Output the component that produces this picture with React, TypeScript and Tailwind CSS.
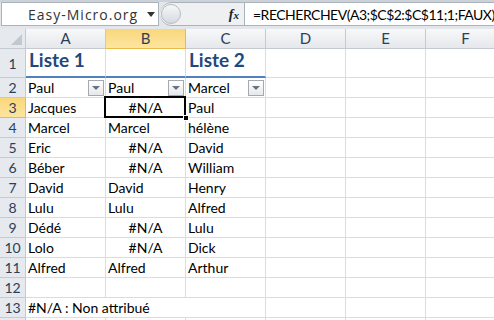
import React from 'react';

const cols = ['A', 'B', 'C', 'D', 'E', 'F'];

const data: [string, string, string][] = [
  ['Jacques', '#N/A', 'Paul'],
  ['Marcel', 'Marcel', 'hélène'],
  ['Eric', '#N/A', 'David'],
  ['Béber', '#N/A', 'William'],
  ['David', 'David', 'Henry'],
  ['Lulu', 'Lulu', 'Alfred'],
  ['Dédé', '#N/A', 'Lulu'],
  ['Lolo', '#N/A', 'Dick'],
  ['Alfred', 'Alfred', 'Arthur'],
];

const font = { fontFamily: 'Lato, "Liberation Sans", sans-serif' };

function RowHead({ n, active, h = 'h-[20px]' }: { n?: number; active?: boolean; h?: string }) {
  return (
    <div
      className={`${h} w-[26px] shrink-0 border-r border-b flex items-center justify-center text-[14px] ${
        active
          ? 'bg-gradient-to-b from-[#f9d77a] to-[#fde5a0] border-[#e9b949] text-[#2c3e5a]'
          : 'bg-[#e6e9ed] border-[#c5cad1] text-[#2c3e5a]'
      }`}
    >
      {n}
    </div>
  );
}

function Cell({ children, className = '' }: { children?: React.ReactNode; className?: string }) {
  return (
    <div className={`h-[20px] w-[80px] shrink-0 border-r border-b border-[#dadcdd] px-[2px] flex items-center text-[14px] text-black whitespace-nowrap ${className}`}>
      {children}
    </div>
  );
}

function Drop() {
  return (
    <div className="w-[16px] h-[16px] border border-[#a3a9b1] bg-gradient-to-b from-white to-[#e6e8eb] flex items-center justify-center">
      <div className="w-0 h-0 border-l-[4px] border-r-[4px] border-t-[4px] border-l-transparent border-r-transparent border-t-[#6b7280]" />
    </div>
  );
}

export default function App() {
  return (
    <div className="w-[494px] h-[320px] overflow-hidden bg-white" style={font}>
      {/* formula bar */}
      <div className="h-[29px] bg-[#e3e6ea] border-t-2 border-[#cdd2d8] flex items-start">
        <div className="w-[158px] shrink-0 h-[24px] ml-[1px] bg-white border border-[#aab2bc] flex items-center">
          <span className="ml-[26px] text-[14px] tracking-[1px] text-[#333] whitespace-nowrap" style={{ fontFamily: '"Open Sans", sans-serif' }}>
            Easy-Micro.org
          </span>
          <div className="ml-auto mr-[3px] w-0 h-0 border-l-[4px] border-r-[4px] border-t-[5px] border-l-transparent border-r-transparent border-t-[#333]" />
        </div>
        <div className="w-[84px] shrink-0 h-[24px] ml-[1px] bg-[#eef0f2] border-y border-[#aab2bc] rounded-l-full flex items-center">
          <div className="w-[20px] h-[20px] rounded-full border border-[#b5bcc4] bg-gradient-to-b from-[#f6f7f8] to-[#d6dadf] ml-[1px]" />
          <span className="ml-auto mr-[5px] italic font-bold text-[14px] text-[#222]" style={{ fontFamily: '"Liberation Serif", serif' }}>
            f<span className="text-[11px]">x</span>
          </span>
        </div>
        <div className="flex-1 min-w-0 overflow-hidden h-[24px] bg-white border border-r-0 border-[#aab2bc] flex items-center pl-[8px] text-[14px] tracking-[-0.5px] text-black whitespace-nowrap">
          =RECHERCHEV(A3;$C$2:$C$11;1;FAUX)
        </div>
      </div>

      {/* column headers */}
      <div className="flex h-[20px]">
        <div className="w-[26px] h-[20px] shrink-0 bg-[#e6e9ed] border-r border-b border-[#c5cad1] relative">
          <div className="absolute right-[3px] bottom-[3px] w-0 h-0 border-l-[11px] border-b-[11px] border-l-transparent border-b-[#c3c8cf]" />
        </div>
        {cols.map((c) => (
          <div
            key={c}
            className={`w-[80px] h-[20px] shrink-0 border-r border-b flex items-center justify-center text-[15px] text-[#2c3e5a] ${
              c === 'B'
                ? 'bg-gradient-to-b from-[#f9d77a] to-[#fde5a0] border-[#e9b949]'
                : 'bg-gradient-to-b from-[#f7f8f9] to-[#e5e8ec] border-[#c5cad1]'
            }`}
          >
            {c}
          </div>
        ))}
      </div>

      {/* row 1 */}
      <div className="flex">
        <RowHead n={1} h="h-[29px]" />
        {[0, 1, 2].map((i) => (
          <div key={i} className="h-[29px] w-[80px] shrink-0 border-r border-r-[#dadcdd] border-b-2 border-b-[#4f81bd] px-[3px] flex items-end pb-[2px] text-[19px] font-bold text-[#1f497d] whitespace-nowrap">
            {i === 0 ? 'Liste 1' : i === 2 ? 'Liste 2' : ''}
          </div>
        ))}
        {[0, 1, 2].map((i) => (
          <div key={i} className="h-[29px] w-[80px] shrink-0 border-r border-b border-[#dadcdd]" />
        ))}
      </div>

      {/* row 2 */}
      <div className="flex">
        <RowHead n={2} />
        {['Paul', 'Paul', 'Marcel'].map((t, i) => (
          <Cell key={i} className="justify-between pr-[1px]">
            <span>{t}</span>
            <Drop />
          </Cell>
        ))}
        <Cell />
        <Cell />
        <Cell />
      </div>

      {/* data rows */}
      {data.map((r, i) => (
        <div key={i} className="flex">
          <RowHead n={i + 3} active={i === 0} />
          <Cell>{r[0]}</Cell>
          <Cell className={`${r[1] === '#N/A' ? 'justify-center' : ''} ${i === 0 ? 'relative' : ''}`}>
            {r[1]}
            {i === 0 && (
              <>
                <div className="absolute left-[-2px] top-[-2px] right-[-1px] bottom-[-1px] border-2 border-black pointer-events-none" />
                <div className="absolute right-[-4px] bottom-[-4px] w-[6px] h-[6px] bg-black border border-white" />
              </>
            )}
          </Cell>
          <Cell>{r[2]}</Cell>
          <Cell />
          <Cell />
          <Cell />
        </div>
      ))}

      {/* row 12 */}
      <div className="flex">
        <RowHead n={12} />
        {[0, 1, 2, 3, 4, 5].map((i) => (
          <Cell key={i} />
        ))}
      </div>

      {/* row 13 */}
      <div className="flex">
        <RowHead n={13} />
        <Cell className="border-r-0 w-[160px]">#N/A : Non attribué</Cell>
        <Cell />
        <Cell />
        <Cell />
        <Cell />
      </div>

      {/* row 14 */}
      <div className="flex">
        <RowHead />
        {[0, 1, 2, 3, 4, 5].map((i) => (
          <Cell key={i} />
        ))}
      </div>
    </div>
  );
}
